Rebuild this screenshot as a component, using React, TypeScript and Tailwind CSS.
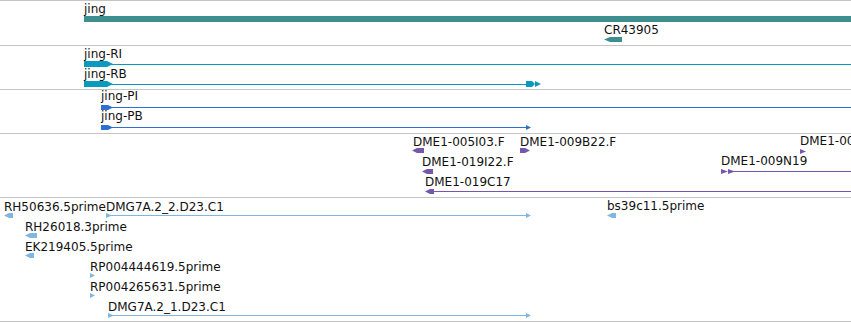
type Label = { text: string; x: number; y: number };

type Shape =
  | { kind: "left"; x1: number; x2: number; y: number; h?: number; tip?: number }
  | { kind: "right"; x1: number; x2: number; y: number; h?: number; tip?: number }
  | { kind: "tri"; x1: number; x2: number; y: number; h?: number }
  | { kind: "rect"; x1: number; x2: number; y: number; h: number };

type TrackData = {
  top: number;
  height: number;
  heightClass: string;
  color: string;
  labels: Label[];
  shapes: Shape[];
};

const W = 851;

const leftArrow = (x1: number, x2: number, y: number, h: number, tip: number) =>
  `${x1},${y + h / 2} ${x1 + tip},${y} ${x2},${y} ${x2},${y + h} ${x1 + tip},${y + h}`;

const rightArrow = (x1: number, x2: number, y: number, h: number, tip: number) =>
  `${x1},${y} ${x2 - tip},${y} ${x2},${y + h / 2} ${x2 - tip},${y + h} ${x1},${y + h}`;

// one entry per track, coordinates are page pixels
const tracks: TrackData[] = [
  {
    top: 1,
    height: 44,
    heightClass: "h-[45px]",
    color: "#3f8e8f",
    labels: [
      { text: "jing", x: 84, y: 3 },
      { text: "CR43905", x: 604, y: 24 },
    ],
    shapes: [
      { kind: "rect", x1: 84, x2: W, y: 16, h: 6 },
      { kind: "left", x1: 604, x2: 622, y: 37, h: 5, tip: 6 },
    ],
  },
  {
    top: 46,
    height: 43,
    heightClass: "h-[44px]",
    color: "#0a9abd",
    labels: [
      { text: "jing-RI", x: 84, y: 48 },
      { text: "jing-RB", x: 84, y: 68 },
    ],
    shapes: [
      { kind: "right", x1: 84, x2: 113, y: 61, h: 6, tip: 6 },
      { kind: "rect", x1: 110, x2: W, y: 64, h: 1 },
      { kind: "right", x1: 84, x2: 113, y: 81, h: 6, tip: 6 },
      { kind: "rect", x1: 110, x2: 527, y: 84, h: 1 },
      { kind: "right", x1: 526, x2: 535, y: 81, h: 6, tip: 3 },
      { kind: "tri", x1: 535, x2: 541, y: 81, h: 6 },
    ],
  },
  {
    top: 90,
    height: 43,
    heightClass: "h-[44px]",
    color: "#2f6fcf",
    labels: [
      { text: "jing-PI", x: 101, y: 90 },
      { text: "jing-PB", x: 101, y: 110 },
    ],
    shapes: [
      { kind: "right", x1: 101, x2: 113, y: 105, h: 5, tip: 5 },
      { kind: "rect", x1: 110, x2: W, y: 107, h: 1 },
      { kind: "right", x1: 101, x2: 113, y: 125, h: 5, tip: 5 },
      { kind: "rect", x1: 110, x2: 527, y: 127, h: 1 },
      { kind: "tri", x1: 526, x2: 531, y: 125, h: 5 },
    ],
  },
  {
    top: 134,
    height: 63,
    heightClass: "h-[64px]",
    color: "#7657ab",
    labels: [
      { text: "DME1-005I03.F", x: 413, y: 136 },
      { text: "DME1-009B22.F", x: 520, y: 136 },
      { text: "DME1-019I22.F", x: 422, y: 156 },
      { text: "DME1-019C17", x: 425, y: 176 },
      { text: "DME1-009N19", x: 721, y: 155 },
      { text: "DME1-009F04", x: 800, y: 135 },
    ],
    shapes: [
      { kind: "left", x1: 412, x2: 424, y: 148, h: 5, tip: 5 },
      { kind: "right", x1: 520, x2: 530, y: 148, h: 5, tip: 5 },
      { kind: "left", x1: 422, x2: 433, y: 169, h: 5, tip: 5 },
      { kind: "left", x1: 425, x2: 434, y: 189, h: 5, tip: 5 },
      { kind: "rect", x1: 432, x2: W, y: 191, h: 1 },
      { kind: "tri", x1: 800, x2: 806, y: 149, h: 5 },
      { kind: "tri", x1: 721, x2: 728, y: 169, h: 5 },
      { kind: "tri", x1: 728, x2: 735, y: 169, h: 5 },
      { kind: "rect", x1: 728, x2: W, y: 171, h: 1 },
    ],
  },
  {
    top: 198,
    height: 123,
    heightClass: "h-[124px]",
    color: "#80b6df",
    labels: [
      { text: "RH50636.5prime", x: 4, y: 201 },
      { text: "DMG7A.2_2.D23.C1", x: 106, y: 201 },
      { text: "bs39c11.5prime", x: 607, y: 200 },
      { text: "RH26018.3prime", x: 25, y: 221 },
      { text: "EK219405.5prime", x: 25, y: 241 },
      { text: "RP004444619.5prime", x: 90, y: 261 },
      { text: "RP004265631.5prime", x: 90, y: 281 },
      { text: "DMG7A.2_1.D23.C1", x: 108, y: 301 },
    ],
    shapes: [
      { kind: "left", x1: 4, x2: 13, y: 213, h: 5, tip: 5 },
      { kind: "tri", x1: 106, x2: 112, y: 213, h: 5 },
      { kind: "rect", x1: 110, x2: 527, y: 215, h: 1 },
      { kind: "tri", x1: 526, x2: 531, y: 213, h: 5 },
      { kind: "left", x1: 607, x2: 616, y: 213, h: 5, tip: 5 },
      { kind: "left", x1: 25, x2: 37, y: 233, h: 5, tip: 5 },
      { kind: "left", x1: 25, x2: 34, y: 253, h: 5, tip: 5 },
      { kind: "tri", x1: 90, x2: 95, y: 273, h: 5 },
      { kind: "tri", x1: 90, x2: 95, y: 293, h: 5 },
      { kind: "tri", x1: 108, x2: 114, y: 313, h: 5 },
      { kind: "rect", x1: 112, x2: 527, y: 315, h: 1 },
      { kind: "tri", x1: 526, x2: 531, y: 313, h: 5 },
    ],
  },
];

const ShapeEl = ({ s, color }: { s: Shape; color: string }) => {
  const h = s.h ?? 5;
  if (s.kind === "rect") {
    return <rect x={s.x1} y={s.y} width={s.x2 - s.x1} height={s.h} fill={color} />;
  }
  if (s.kind === "left") {
    return <polygon points={leftArrow(s.x1, s.x2, s.y, h, s.tip ?? 5)} fill={color} />;
  }
  if (s.kind === "right") {
    return <polygon points={rightArrow(s.x1, s.x2, s.y, h, s.tip ?? 5)} fill={color} />;
  }
  return (
    <polygon
      points={`${s.x1},${s.y} ${s.x2},${s.y + h / 2} ${s.x1},${s.y + h}`}
      fill={color}
    />
  );
};

const Track = ({ track }: { track: TrackData }) => (
  <div className={`relative w-full overflow-hidden border-b border-[#c4c4c4] ${track.heightClass}`}>
    <svg
      className="absolute inset-0"
      width={W}
      height={track.height}
      viewBox={`0 ${track.top} ${W} ${track.height}`}
    >
      {track.shapes.map((s, i) => (
        <ShapeEl key={i} s={s} color={track.color} />
      ))}
    </svg>
    {track.labels.map((l) => (
      <div
        key={l.text}
        className="absolute whitespace-nowrap text-[12px] leading-[12px] text-[#111]"
        style={{ left: l.x, top: l.y - track.top }}
      >
        {l.text}
      </div>
    ))}
  </div>
);

export default function App() {
  return (
    <div className="flex flex-col w-[851px] h-[322px] overflow-hidden bg-white border-t border-[#c4c4c4] font-['DejaVu_Sans',sans-serif]">
      {tracks.map((t) => (
        <Track key={t.top} track={t} />
      ))}
    </div>
  );
}
